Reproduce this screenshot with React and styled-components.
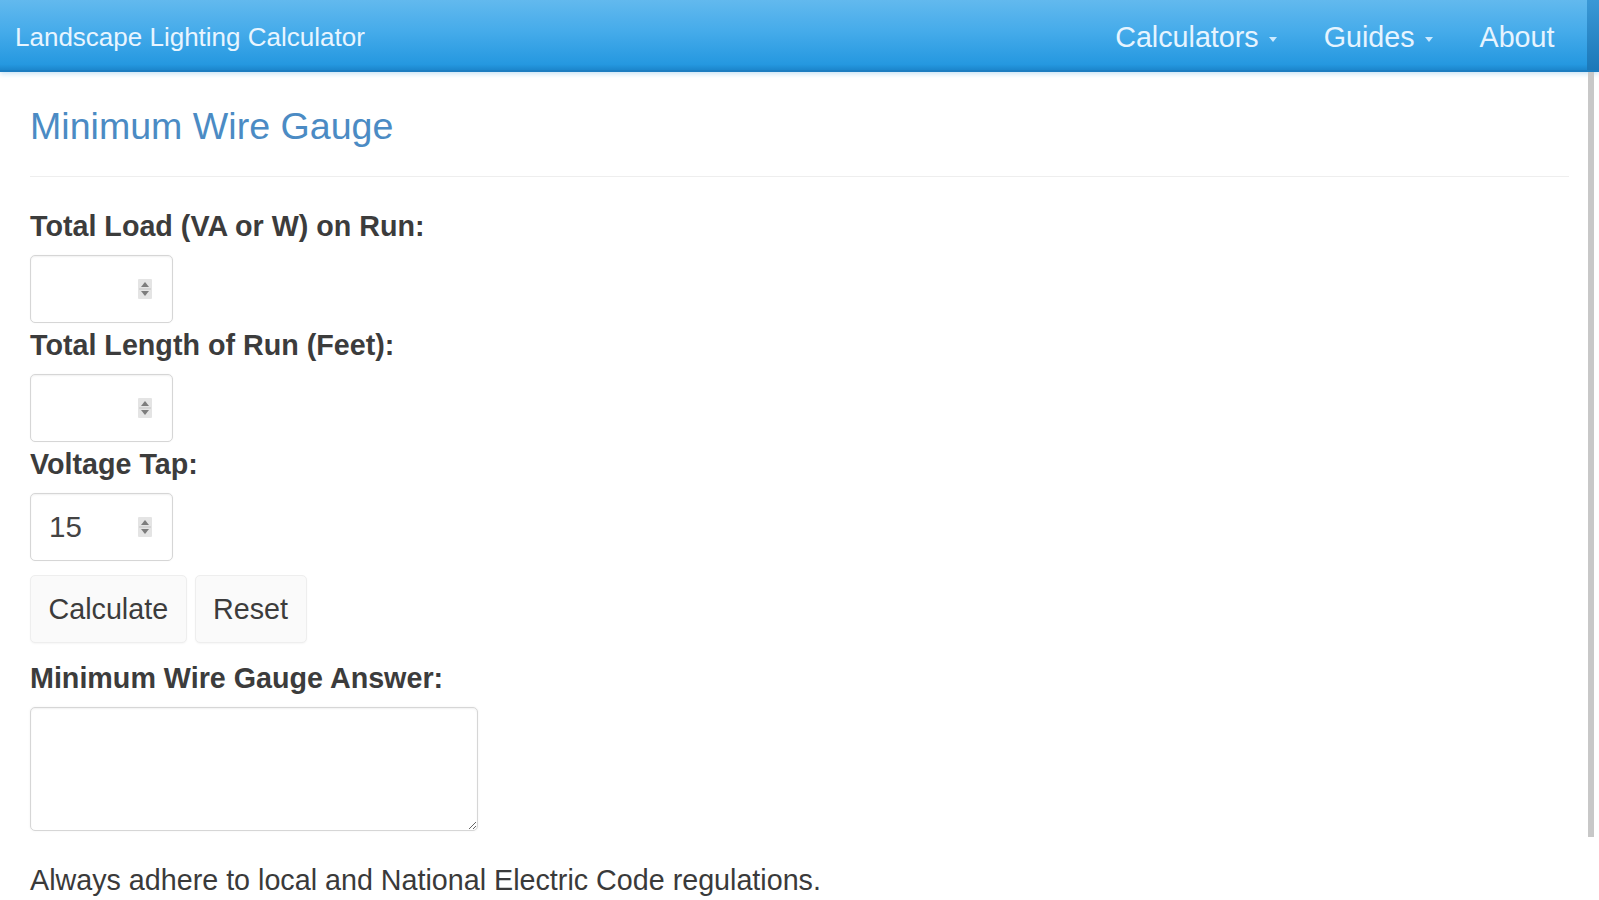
import React from "react";
import styled, { createGlobalStyle } from "styled-components";

const GlobalStyle = createGlobalStyle`
  html, body {
    margin: 0;
    padding: 0;
    overflow: hidden;
    background: #ffffff;
  }
  body {
    font-family: "Liberation Sans", Arial, sans-serif;
    color: #333333;
  }
  * { box-sizing: border-box; }
`;

const Page = styled.div`
  position: relative;
  width: 1599px;
  height: 900px;
`;

const Navbar = styled.header`
  position: relative;
  height: 72px;
  display: flex;
  align-items: center;
  justify-content: space-between;
  padding: 0 21px 0 15px;
  background: linear-gradient(to bottom, #62b9ee 0%, #45abea 45%, #2598e0 92%, #1c86cc 100%);
  border-bottom: 2px solid #1b7cc0;
  box-shadow: 0 2px 5px rgba(40, 140, 210, 0.25);

  &::after {
    content: "";
    position: absolute;
    top: 0;
    right: 0;
    width: 12px;
    height: 100%;
    background: linear-gradient(to bottom, #3a98d6, #1b78b8);
  }
`;

const Brand = styled.a`
  font-size: 26px;
  color: #e8f5ff;
  text-decoration: none;
  padding-top: 5px;
`;

const NavList = styled.nav`
  display: flex;
  align-items: center;
  padding-top: 5px;
`;

const NavLink = styled.a`
  display: flex;
  align-items: center;
  padding: 0 23.5px;
  font-size: 28.7px;
  color: #e6f4ff;
  text-decoration: none;
  white-space: pre;
`;

const Caret = styled.span`
  display: inline-block;
  width: 0;
  height: 0;
  margin-left: 2px;
  margin-top: 4px;
  border-top: 5px solid #cdeaff;
  border-left: 4px solid transparent;
  border-right: 4px solid transparent;
`;

const ScrollThumb = styled.div`
  position: absolute;
  top: 72px;
  left: 1588px;
  width: 6px;
  height: 765px;
  background: #c8c8c8;
`;

const Main = styled.main`
  padding: 0 30px;
`;

const PageHeader = styled.div`
  margin-top: 34px;
  padding-bottom: 29px;
  border-bottom: 1px solid #eeeeee;
`;

const Title = styled.h1`
  margin: 0;
  font-size: 37.6px;
  font-weight: normal;
  line-height: 1.1;
  color: #4b8bc4;
`;

const Form = styled.form`
  margin-top: 32px;
  display: flex;
  flex-direction: column;
  align-items: flex-start;
`;

const Group = styled.div`
  display: flex;
  flex-direction: column;
  align-items: flex-start;
  margin-top: ${(p) => p.$mt || 0}px;
  margin-bottom: 5px;
`;

const Label = styled.label`
  display: block;
  font-size: 28.7px;
  font-weight: bold;
  line-height: 1.2;
  color: #3c3c3c;
  margin-bottom: 11.6px;
`;

const Field = styled.div`
  width: 143px;
  height: 68px;
  display: flex;
  align-items: center;
  justify-content: space-between;
  padding: 0 20px 0 18px;
  border: 1px solid #d6d6d6;
  border-radius: 5px;
  background: #fff;
  box-shadow: inset 0 1px 2px rgba(0, 0, 0, 0.06), 0 0 2px rgba(0, 0, 0, 0.04);
`;

const FieldInput = styled.input`
  width: 60px;
  border: none;
  outline: none;
  padding: 0;
  background: transparent;
  font-family: "Liberation Sans", Arial, sans-serif;
  font-size: 29.5px;
  color: #444444;
`;

const ButtonRow = styled.div`
  display: flex;
  gap: 8px;
  margin-top: 9px;
`;

const Button = styled.button`
  height: 68px;
  padding: 0 17.5px;
  font-family: "Liberation Sans", Arial, sans-serif;
  font-size: 28.7px;
  color: #3c3c3c;
  background: #fafafa;
  border: 1px solid #eeeeee;
  border-radius: 5px;
  box-shadow: 0 1px 2px rgba(0, 0, 0, 0.04);
`;

const Answer = styled.textarea`
  width: 448px;
  height: 124px;
  border: 1px solid #d6d6d6;
  border-radius: 5px;
  box-shadow: inset 0 1px 2px rgba(0, 0, 0, 0.06), 0 0 3px rgba(0, 0, 0, 0.05);
  font-family: "Liberation Sans", Arial, sans-serif;
  font-size: 28px;
  outline: none;
`;

const Note = styled.p`
  margin: 27px 0 0;
  font-size: 28.7px;
  line-height: 1.2;
  color: #3a3a3a;
`;

function Spinner() {
  return (
    <svg width="14" height="20" viewBox="0 0 14 20" aria-hidden="true">
      <rect x="0" y="0" width="14" height="20" rx="1" fill="#e4e4e4" />
      <line x1="1" y1="10" x2="13" y2="10" stroke="#c4c4c4" strokeWidth="1" />
      <path d="M3 8 L7 3 L11 8 Z" fill="#7d7d7d" />
      <path d="M3 12 L7 17 L11 12 Z" fill="#7d7d7d" />
    </svg>
  );
}

function NumberField({ value }) {
  return (
    <Field>
      <FieldInput type="text" defaultValue={value} />
      <Spinner />
    </Field>
  );
}

export default function App() {
  return (
    <Page>
      <GlobalStyle />
      <Navbar>
        <Brand href="#">Landscape Lighting Calculator</Brand>
        <NavList>
          <NavLink href="#">
            {"Calculators "}
            <Caret />
          </NavLink>
          <NavLink href="#">
            {"Guides "}
            <Caret />
          </NavLink>
          <NavLink href="#">About</NavLink>
        </NavList>
      </Navbar>
      <Main>
        <PageHeader>
          <Title>Minimum Wire Gauge</Title>
        </PageHeader>
        <Form onSubmit={(e) => e.preventDefault()}>
          <Group>
            <Label>Total Load (VA or W) on Run:</Label>
            <NumberField value="" />
          </Group>
          <Group>
            <Label>Total Length of Run (Feet):</Label>
            <NumberField value="" />
          </Group>
          <Group>
            <Label>Voltage Tap:</Label>
            <NumberField value="15" />
          </Group>
          <ButtonRow>
            <Button type="button">Calculate</Button>
            <Button type="button">Reset</Button>
          </ButtonRow>
          <Group $mt={18}>
            <Label>Minimum Wire Gauge Answer:</Label>
            <Answer readOnly />
          </Group>
        </Form>
        <Note>Always adhere to local and National Electric Code regulations.</Note>
      </Main>
      <ScrollThumb />
    </Page>
  );
}
